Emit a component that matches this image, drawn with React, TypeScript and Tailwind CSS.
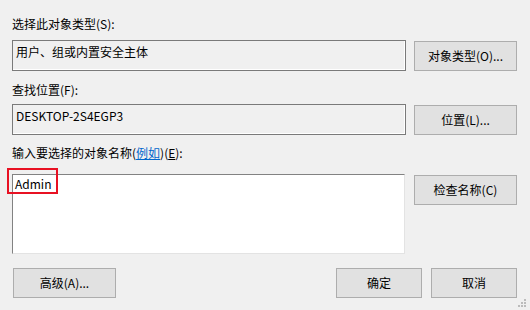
const font = "font-['Noto_Sans_CJK_SC',sans-serif]"

function Btn({ label, className = "" }: { label: string; className?: string }) {
  return (
    <button
      className={`flex h-[30px] items-center justify-center border border-[#adadad] bg-[#e1e1e1] text-[12px] text-black ${className}`}
    >
      {label}
    </button>
  )
}

function ReadBox({ text }: { text: string }) {
  return (
    <div className="h-[31px] w-[394px] border border-[#7a7a7a] bg-[#f0f0f0] pl-[3px] pt-[3px] text-[12px] leading-[16px] text-black shadow-[inset_-1px_-1px_0_#ffffff]">
      {text}
    </div>
  )
}

export default function App() {
  return (
    <div className={`relative h-[310px] w-[530px] overflow-hidden bg-[#f0f0f0] px-[12px] pt-[16px] ${font}`}>
      {/* object type */}
      <div className="h-[16px] text-[12px] leading-[16px] text-black">选择此对象类型(S):</div>
      <div className="mt-[8px] flex gap-[8px]">
        <ReadBox text="用户、组或内置安全主体" />
        <Btn label="对象类型(O)..." className="mt-px w-[103px]" />
      </div>

      {/* location */}
      <div className="mt-[11px] h-[16px] text-[12px] leading-[16px] text-black">查找位置(F):</div>
      <div className="mt-[6px] flex gap-[8px]">
        <ReadBox text="DESKTOP-2S4EGP3" />
        <Btn label="位置(L)..." className="mt-px h-[29px] w-[103px]" />
      </div>

      {/* names */}
      <div className="mt-[10px] h-[16px] text-[12px] leading-[16px] text-black">
        输入要选择的对象名称(<span className="text-[#0066cc] underline">例如</span>)(<span className="underline">E</span>):
      </div>
      <div className="mt-[13px] flex gap-[8px]">
        <div className="relative h-[80px] w-[393px] border border-t-[#828282] border-l-[#828282] border-r-[#e3e3e3] border-b-[#e3e3e3] bg-white pl-[2px] pt-[1px] text-[12px] leading-[16px] text-black">
          Admin
          <div className="absolute left-[-6px] top-[-7px] h-[26px] w-[51px] border-2 border-[#e81123]" />
        </div>
        <Btn label="检查名称(C)" className="ml-px mt-px h-[29px] w-[103px]" />
      </div>

      {/* footer */}
      <div className="mt-[14px] flex items-center">
        <Btn label="高级(A)..." className="ml-px w-[103px]" />
        <div className="flex-1" />
        <Btn label="确定" className="w-[86px]" />
        <Btn label="取消" className="ml-[9px] mr-px w-[86px]" />
      </div>

      {/* resize grip */}
      <svg className="absolute bottom-[2px] right-[3px]" width="10" height="10" viewBox="0 0 10 10">
        <rect x="7" y="1" width="2" height="2" fill="#bcbcbc" />
        <rect x="4" y="4" width="2" height="2" fill="#bcbcbc" />
        <rect x="7" y="4" width="2" height="2" fill="#bcbcbc" />
        <rect x="1" y="7" width="2" height="2" fill="#bcbcbc" />
        <rect x="4" y="7" width="2" height="2" fill="#bcbcbc" />
        <rect x="7" y="7" width="2" height="2" fill="#bcbcbc" />
      </svg>
    </div>
  )
}
